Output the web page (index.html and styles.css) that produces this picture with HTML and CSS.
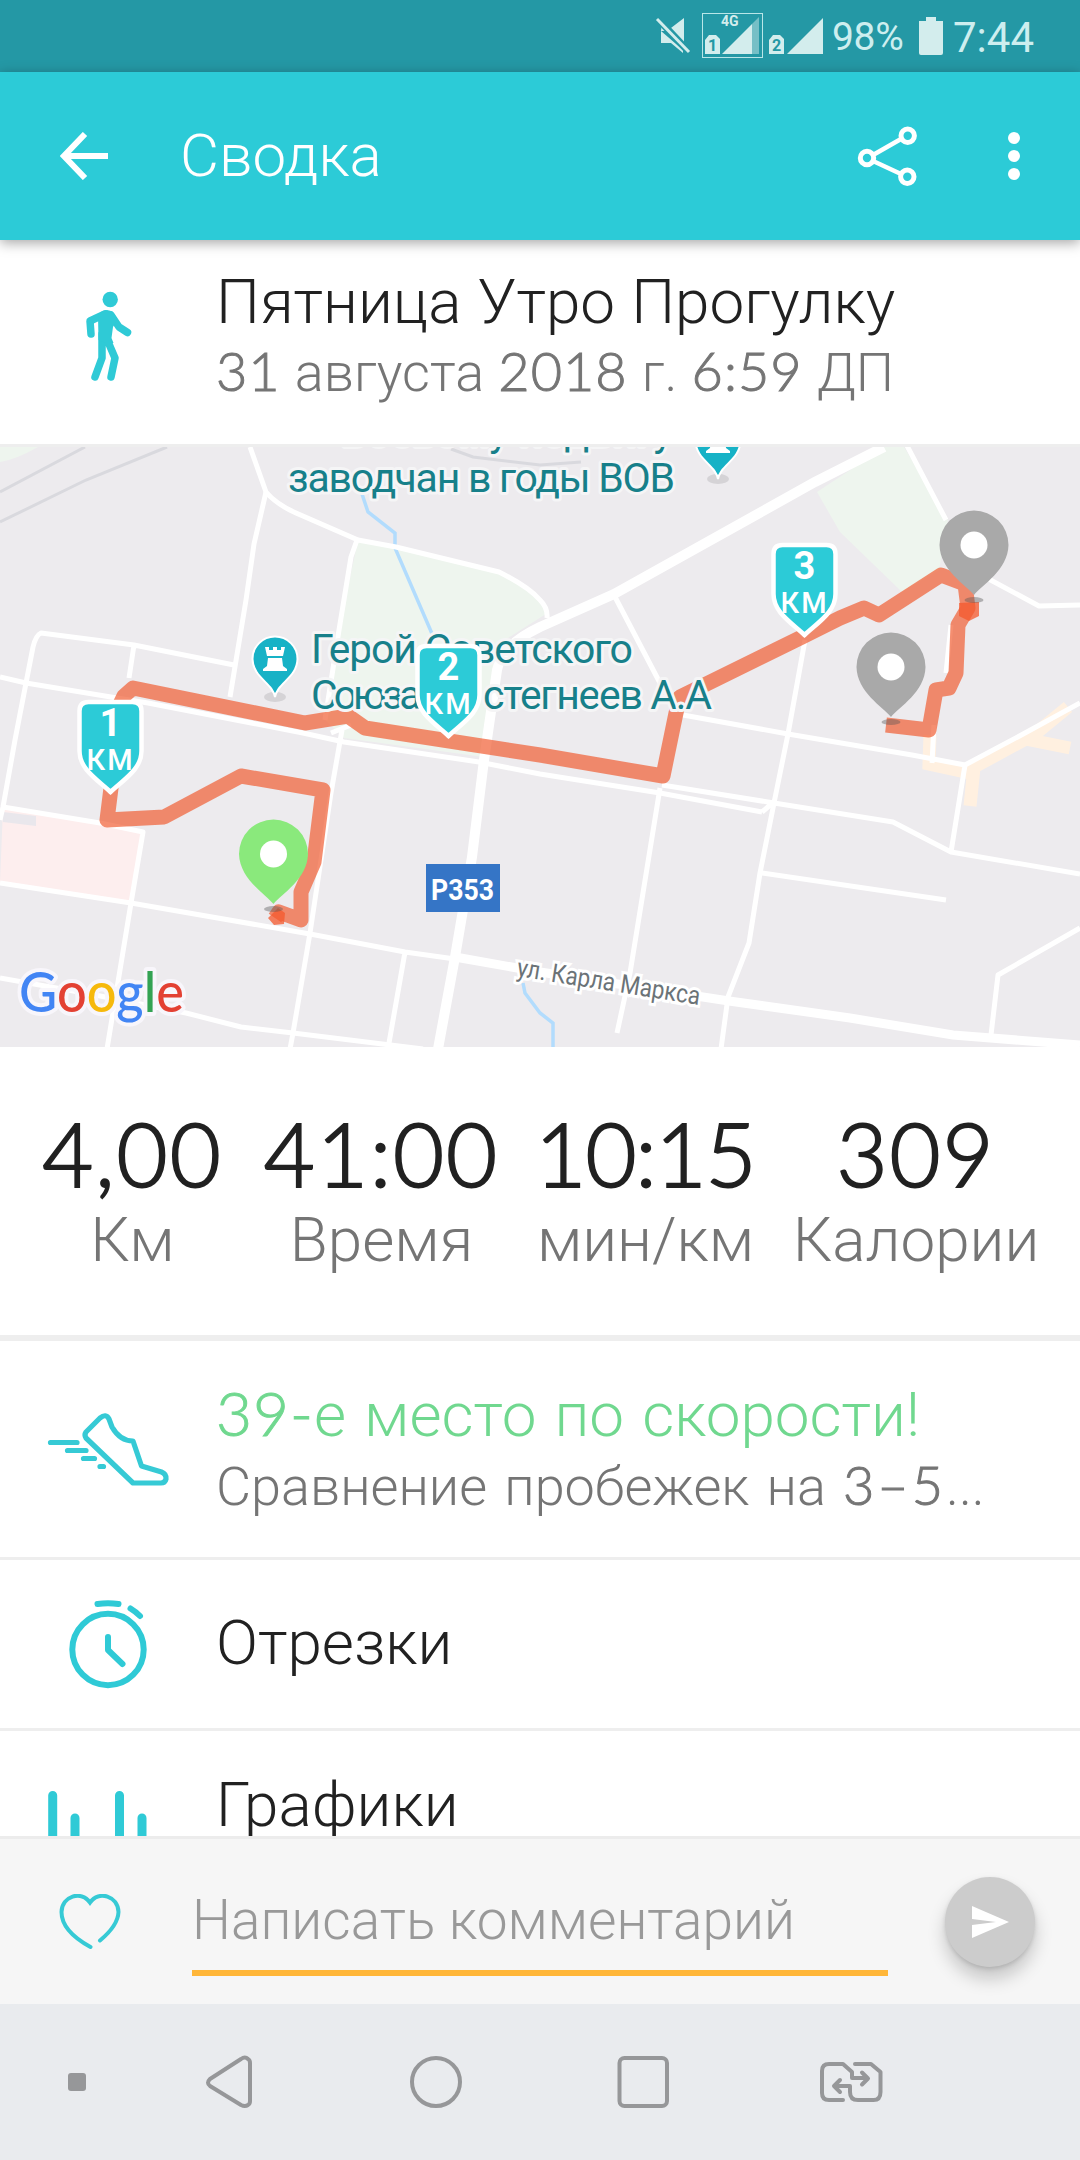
FILE: index.html
```
<!DOCTYPE html>
<html lang="ru">
<head>
    <meta charset="UTF-8">
    <meta name="viewport" content="width=device-width, initial-scale=1.0">
    <title>Сводка</title>
    <link rel="stylesheet" href="styles.css">
</head>
<body>
    <div class="status-bar">
        <svg class="status-icons" width="170" height="72" viewBox="654 0 170 72">
            <path d="M661 31l6 0 17-13v25l-22-22z M661 31v12h10l12 10v-3z" fill="#d3eded"/>
            <path d="M658 19l31 33" stroke="#2498a5" stroke-width="7"/>
            <path d="M657 19l32 33" stroke="#d3eded" stroke-width="3"/>
            <rect x="702.5" y="13.5" width="60" height="44" fill="none" stroke="#b9e6e8"/>
            <path d="M705 54V40l4-5h7l4 4v15z M722 54l30-30v30z M769 54V40l4-5h7l4 4v15z M787 54l36-36v36z" fill="#d3eded"/>
            <path d="M752 24l7-7v37h-7z" fill="#76bfc6"/>
            <text class="status-net" x="721" y="26">4G</text>
            <text class="status-sim" x="712.5" y="51">1</text>
            <text class="status-sim" x="776.5" y="51">2</text>
        </svg>
        <span class="battery-level">98%</span>
        <svg class="battery" width="24" height="38" viewBox="0 0 24 38">
            <path d="M7 0h10v4h7v32q0 2-2 2H2q-2 0-2-2V4h7z" fill="#d3eded"/>
        </svg>
        <span class="clock">7:44</span>
    </div>

    <header class="app-bar">
        <svg class="back" width="50" height="48" viewBox="60 132 50 48">
            <path d="M85 134L64 156l21 22M63 156h45" fill="none" stroke="#fff" stroke-width="6"/>
        </svg>
        <h1>Сводка</h1>
        <svg class="share" width="62" height="62" viewBox="857 125 62 62">
            <g fill="none" stroke="#fff">
                <path d="M873 155l28-16M873 161l28 13" stroke-width="4.5"/>
                <circle cx="867" cy="158" r="6.7" stroke-width="5"/>
                <circle cx="907.7" cy="135.7" r="6.7" stroke-width="5"/>
                <circle cx="907.3" cy="176.7" r="6.7" stroke-width="5"/>
            </g>
        </svg>
        <svg class="more" width="12" height="48" viewBox="0 0 12 48" fill="#fff">
            <circle cx="6" cy="6" r="6"/><circle cx="6" cy="24" r="6"/><circle cx="6" cy="42" r="6"/>
        </svg>
    </header>

    <main class="content">
        <section class="row activity">
            <div class="row-icon">
                <svg width="50" height="94" viewBox="84 290 50 94">
                    <g fill="none" stroke="#2fcad6" stroke-width="7.5" stroke-linecap="round" stroke-linejoin="round">
                        <path d="M106 314l-15 7 1 13M112 315l8 12 8.5 5.5M103 334v24l-7 19M107 337l9 21-4 19"/>
                    </g>
                    <circle cx="111.2" cy="299.5" r="7.7" fill="#2fcad6"/>
                    <path d="M99 316q3-6 9-6 7 0 10 10l-4 7-1.500 11 2 5h-8l-7-3z" fill="#2fcad6"/>
                </svg>
            </div>
            <div class="row-text">
                <div class="row-title">Пятница Утро Прогулку</div>
                <div class="row-sub"><span class="num">31</span> августа <span class="num">2018</span> г. <span class="num">6:59</span> ДП</div>
            </div>
        </section>

        <section class="map">
            <svg width="1080" height="600" viewBox="0 447 1080 600">
                <defs>
                    <g id="place-pin">
                        <ellipse cx="0" cy="55" rx="9.5" ry="3" fill="#555" opacity=".4"/>
                        <path d="M0 50C-8 40-34 25-34.500 0A34.500 34.500 0 0 1 34.500 0C34 25 8 40 0 50z"/>
                        <circle r="13.5" fill="#fff"/>
                    </g>
                    <g id="poi-pin">
                        <ellipse cx="0" cy="38" rx="11" ry="5" fill="#c4c3c6" opacity=".6"/>
                        <path d="M0 38C-2 24-22 19-22.500 0A22.500 22.500 0 0 1 22.500 0C22 19 2 24 0 38z" fill="#17b2c6" stroke="#fff" stroke-width="2"/>
                        <path d="M-10-12h4v3h4v-3h4v3h4v-3h4l-2 9H-8zM-7-1H7l1 8 4 3v2h-24v-2l4-3z" fill="#fff"/>
                    </g>
                    <path id="km-shield" d="M-22-44h44q9 0 9 9V5C31 23 14 33 0 46-14 33-31 23-31 5v-40q0-9 9-9z"/>
                </defs>

                <!-- areas -->
                <path d="M0 447h38Q15 460 0 462zM358 540l38 7 103 25 41 26 6 16-41 26-9 32-12 85-140-19-19-18 14-90zM817 492l68-45h19l44 73-9 50-37 22-62-60z" fill="#eef5ee"/>
                <path d="M3 808l140 24-12 70-131-20z" fill="#fdeeee"/>
                <path d="M3 812l33 4v10l-33-4z" fill="#e9e7ec"/>
                <path d="M930 735l-1 29 36 8 70-38 33-27M1025 739l45 9M974 768l-4 38" fill="none" stroke="#fff0e0" stroke-width="13"/>

                <!-- railway and water -->
                <path d="M0 492l85-45M0 522l86-42 81-33M451 449l22 8 67 8 41-3" fill="none" stroke="#d9d9de" stroke-width="3"/>
                <path d="M360 488l8 24 27 21v15l38 88M523 983l2 10 15 20 13 10v24" fill="none" stroke="#b2dcfd" stroke-width="3.5"/>

                <!-- streets -->
                <g fill="none" stroke="#fff" stroke-width="5" stroke-linejoin="round">
                    <path d="M250 447l16 45q10 12 30 21l62 27 38 7 103 25q30 15 41 28 8 8 7 18"/>
                    <path d="M266 492l-12 52-8 56-16 97M357 540l-6 17-12 73-14 90"/>
                    <path d="M0 677l26 6 91 15 31 5 155 30 41 9 135 20 61 12 120 19 102 19"/>
                    <path d="M0 820l3-13 12-67 11-57 7-36q3-12 8-14l93 12 100 20M134 645l-5 33"/>
                    <path d="M342 730l-11 63-21 140-17 100-3 16M331 733l20-8"/>
                    <path d="M3 807l97 16 43 9-12 71-24 146M0 883l131 20 179 31 95 18 50 7M405 952l-16 91"/>
                    <path d="M0 978l90 16 96 19 55 14 52 6 130 16"/>
                    <path d="M904 440l42 80M985 577l54 29 41-1M614 595l46 88M951 625l-5 48"/>
                    <path d="M683 715l105 19 124 21 53 10 60-32 55-30M934 725l-2 38M965 765l-14 87"/>
                    <path d="M805 640l-17 94-14 69-14 70-11 70-21 54-7 52"/>
                    <path d="M662 785l112 18 119 19 58 30 129 22M660 788l-30 185-13 60M762 873l184 27M1080 928l-82 47-7 60M762 812l14-12"/>
                </g>
                <path d="M884 447l-69 35-201 112-74 33q-38 18-43 43l-13 90-12 97-17 100-17 92" fill="none" stroke="#fff" stroke-width="10"/>
                <path d="M455 957l85 15 189 29 121 17 103 17 127 10" fill="none" stroke="#fff" stroke-width="9"/>

                <!-- recorded track -->
                <path class="track" d="M275 918l4-6 22 8v-28l13-30 9-72-82-14-77 41-57 3 5-40-2-55 14-29 9-8 172 35 43-7 17 12 175 27 123 21 13-63 4-16 122-60 38-19 24-10 15 7 62-40 24 9 3 24-10 17-2 48-7 15-13 2-7 40-43-5"/>
                <path d="M268 918l10-10 7 5-1 11-10 1zM959 603l20-1v14l-10 5-10-5z" fill="#f4582c" opacity=".75"/>

                <!-- labels -->
                <g class="poi-label">
                    <text x="673" y="446" text-anchor="end">Боевому подвигу</text>
                    <text x="288" y="492" textLength="387">заводчан в годы ВОВ</text>
                    <text x="311" y="663" textLength="322">Герой Советского</text>
                    <text x="311" y="709" textLength="158">Союза Ко</text>
                    <text x="483" y="709" textLength="229">стегнеев А.А</text>
                </g>
                <text class="street-label" textLength="185" lengthAdjust="spacingAndGlyphs" transform="translate(516 976) rotate(9)">ул. Карла Маркса</text>
                <rect x="426" y="864" width="74" height="48" fill="#3575c6"/>
                <text class="road-number" x="431" y="900" textLength="63" lengthAdjust="spacingAndGlyphs">Р353</text>

                <!-- pins -->
                <use href="#poi-pin" x="275" y="659"/>
                <use href="#poi-pin" x="718" y="441"/>
                <use href="#place-pin" x="273.5" y="854" fill="#8ae97c"/>
                <use href="#place-pin" x="974" y="545" fill="#a9a9a9"/>
                <use href="#place-pin" x="891" y="667" fill="#a9a9a9"/>
                <g class="km" transform="translate(110.5 746)">
                    <use href="#km-shield"/>
                    <text class="km-value" y="-10">1</text>
                    <text class="km-unit" x="-1" y="24" textLength="46">КМ</text>
                </g>
                <g class="km" transform="translate(448.5 690)">
                    <use href="#km-shield"/>
                    <text class="km-value" y="-10">2</text>
                    <text class="km-unit" x="-1" y="24" textLength="46">КМ</text>
                </g>
                <g class="km" transform="translate(804.5 589)">
                    <use href="#km-shield"/>
                    <text class="km-value" y="-10">3</text>
                    <text class="km-unit" x="-1" y="24" textLength="46">КМ</text>
                </g>
                <text class="google" x="19" y="1012" textLength="165" lengthAdjust="spacingAndGlyphs"><tspan fill="#4285f4">G</tspan><tspan fill="#e34133">o</tspan><tspan fill="#f6b90c">o</tspan><tspan fill="#4285f4">g</tspan><tspan fill="#34a353">l</tspan><tspan fill="#e34133">e</tspan></text>
            </svg>
        </section>

        <section class="stats">
            <div class="stat"><div class="stat-value num">4,00</div><div class="stat-label">Км</div></div>
            <div class="stat"><div class="stat-value num">41:00</div><div class="stat-label">Время</div></div>
            <div class="stat pace"><div class="stat-value num">10:15</div><div class="stat-label">мин/км</div></div>
            <div class="stat"><div class="stat-value num">309</div><div class="stat-label">Калории</div></div>
        </section>

        <section class="row speed">
            <div class="row-icon">
                <svg width="124" height="80" viewBox="46 1410 124 80">
                    <g fill="none" stroke="#36cad5" stroke-width="5.2" stroke-linecap="round" stroke-linejoin="round">
                        <path d="M86 1432l14-14q6-5 9 1l3 8q8 14 21 14l8.500 25 20 6q5 2 4.500 7-1 4-5 4H133L86 1438q-2-3 0-6z"/>
                        <path d="M50.500 1442.500H77M67.500 1450.500H86M83.500 1458.500h11M100 1466.500h3.500"/>
                    </g>
                </svg>
            </div>
            <div class="row-text">
                <div class="row-title good"><span class="num">39-</span>е место по скорости!</div>
                <div class="row-sub">Сравнение пробежек на <span class="num">3–5</span>...</div>
            </div>
        </section>

        <section class="row splits">
            <div class="row-icon">
                <svg width="80" height="94" viewBox="67.5 1597 80 94">
                    <g fill="none" stroke="#2fcad6" stroke-width="6" stroke-linecap="round" stroke-linejoin="round">
                        <circle cx="107.5" cy="1649.5" r="35.7"/>
                        <path d="M107.500 1637v13l14.500 14M97 1604q10.500-1.500 21 0M130 1608.500q5 3 9.500 7.500"/>
                    </g>
                </svg>
            </div>
            <div class="row-text">
                <div class="row-title">Отрезки</div>
            </div>
        </section>

        <section class="row charts">
            <div class="row-icon">
                <svg width="100" height="90" viewBox="47.5 1791 100 90">
                    <path d="M52.200 1795.500V1881M74.500 1818V1881M119 1795.500V1881M141.500 1818V1881M97 1850v31" stroke="#2fcad6" stroke-width="9" stroke-linecap="round"/>
                </svg>
            </div>
            <div class="row-text">
                <div class="row-title">Графики</div>
            </div>
        </section>
    </main>

    <footer class="comment-bar">
        <svg class="heart" width="64" height="56" viewBox="58 1894 64 56">
            <path d="M90.500 1947C74 1938 61.500 1926 61.500 1912 62 1896 81 1890 90 1902.500 99 1890 118 1896 118.500 1912 118 1924 109 1933 100 1940.500" fill="none" stroke="#36cad5" stroke-width="4" stroke-linecap="round"/>
        </svg>
        <div class="comment-input">Написать комментарий</div>
        <div class="send">
            <svg width="37" height="32" viewBox="0 0 37 32">
                <path d="M0 0l37 16L0 32V19l24-3L0 13z" fill="#fff"/>
            </svg>
        </div>
    </footer>

    <nav class="nav-bar">
        <svg width="1080" height="156" viewBox="0 2004 1080 156">
            <rect x="68" y="2073" width="18" height="18" rx="3" fill="#969799"/>
            <g fill="none" stroke="#969799" stroke-width="4" stroke-linecap="round" stroke-linejoin="round">
                <path d="M210 2079l31-20q4-3 7 0 2 1 2 4v38q0 3-2 4-3 2-7 0l-31-19q-4-3 0-7z"/>
                <circle cx="436" cy="2082" r="24"/>
                <rect x="619.5" y="2058" width="47.5" height="48" rx="5"/>
                <path d="M843 2100h-14q-7 0-7-7v-22q0-7 7-7h14l9 8v6h15M862 2072.500l6 6-6 6"/>
                <path d="M855 2064h16l9.500 8v20q0 8-7 8H858q-8 0-8-8v-6h-15M840 2080l-6 6 6 6"/>
            </g>
        </svg>
    </nav>
</body>
</html>
```

FILE: styles.css
```
* {
    box-sizing: border-box;
}

body {
    margin: 0;
    width: 1080px;
    height: 2160px;
    display: flex;
    flex-direction: column;
    overflow: hidden;
    background: #fff;
    font-family: Roboto, "Liberation Sans", sans-serif;
    font-weight: 300;
    color: #212121;
}

svg {
    display: block;
    flex: none;
}

.num {
    font-family: Lato, sans-serif;
    font-weight: 300;
    line-height: 1;
    letter-spacing: 1px;
    -webkit-text-stroke: 1px currentColor;
}

/* status bar */
.status-bar {
    height: 72px;
    flex: none;
    display: flex;
    align-items: center;
    padding-left: 654px;
    background: #2498a5;
    color: #cdeeef;
    font-weight: 400;
    white-space: nowrap;
}

.status-net {
    font-size: 14px;
    font-weight: 700;
    fill: #d3eded;
}

.status-sim {
    font-size: 16px;
    font-weight: 700;
    fill: #2498a5;
    text-anchor: middle;
}

.battery-level {
    width: 87px;
    margin-left: 8px;
    padding-top: 2px;
    font-size: 39px;
    letter-spacing: -0.3px;
}

.clock {
    margin-left: 10px;
    padding-top: 2px;
    font-size: 42px;
}

/* app bar */
.app-bar {
    position: relative;
    z-index: 1;
    height: 168px;
    flex: none;
    display: flex;
    align-items: center;
    padding: 0 60px;
    background: #2ccbd7;
    color: #fff;
    box-shadow: 0 3px 12px rgba(0, 0, 0, 0.35);
}

.app-bar h1 {
    flex: 1;
    margin: 0 0 0 70px;
    font-size: 60px;
    font-weight: 300;
    line-height: 70px;
}

.share {
    margin-right: 89px;
}

/* list rows */
.content {
    flex: 1;
    min-height: 0;
    overflow: hidden;
}

.row {
    display: flex;
    border-bottom: 3px solid #eee;
}

.row-icon {
    width: 216px;
    display: flex;
    align-items: flex-start;
    justify-content: center;
}

.row-text {
    flex: 1;
    white-space: nowrap;
}

.row-title {
    font-size: 62px;
    line-height: 71px;
    word-spacing: 1px;
}

.row-sub {
    font-size: 54px;
    line-height: 71px;
    word-spacing: 1px;
    color: #757575;
}

.good {
    color: #70d88f;
    word-spacing: 3px;
}

.activity {
    height: 207px;
    padding-top: 26px;
}

.activity .row-icon {
    padding-top: 24px;
}

.speed {
    height: 219px;
    padding-top: 38px;
}

.speed .row-icon {
    padding-top: 31px;
}

.speed .row-sub {
    padding-top: 1px;
    word-spacing: 4px;
}

.speed .row-sub .num {
    letter-spacing: 3px;
}

.splits {
    height: 171px;
    align-items: center;
}

.splits .row-text {
    padding-bottom: 4px;
}

.charts {
    height: 171px;
    padding-top: 38px;
}

.charts .row-icon {
    padding: 22px 21px 0 0;
}

/* map */
.map {
    height: 600px;
    overflow: hidden;
    background: #edebee;
}

.track {
    fill: none;
    stroke: #f0582c;
    stroke-width: 15px;
    stroke-linejoin: round;
    opacity: 0.68;
}

.poi-label {
    font-size: 41px;
    font-weight: 400;
    fill: #17808a;
    stroke: #f5f5f6;
    stroke-width: 6px;
    stroke-linejoin: round;
    paint-order: stroke;
}

.street-label {
    font-size: 26px;
    font-weight: 400;
    fill: #6b7377;
    stroke: #fff;
    stroke-width: 6px;
    paint-order: stroke;
}

.road-number {
    font-size: 30px;
    font-weight: 700;
    fill: #fff;
}

.km {
    fill: #2ccbd7;
    stroke: #fff;
    stroke-width: 4.5px;
    text-anchor: middle;
}

.km text {
    fill: #fff;
    stroke: none;
}

.km-value {
    font-size: 38px;
    font-weight: 700;
}

.km-unit {
    font-size: 29px;
    font-weight: 500;
}

.google {
    font-family: Lato, sans-serif;
    font-size: 55px;
    font-weight: 500;
    stroke: #f8f6fb;
    stroke-width: 8px;
    stroke-linejoin: round;
    paint-order: stroke;
}

/* stats */
.stats {
    height: 294px;
    display: grid;
    grid-template-columns: 175px 225px 205px 238px;
    column-gap: 49px;
    padding: 61px 0 0 45px;
    border-bottom: 6px solid #eee;
}

.stat {
    display: flex;
    flex-direction: column;
    align-items: center;
    white-space: nowrap;
}

.stat-value {
    font-size: 88px;
    letter-spacing: 2px;
    line-height: 90px;
    -webkit-text-stroke-width: 2px;
}

.pace .stat-value {
    letter-spacing: -1px;
}

.stat-label {
    font-size: 62px;
    line-height: 84px;
    color: #757575;
}

/* comment bar */
.comment-bar {
    height: 168px;
    flex: none;
    display: flex;
    align-items: center;
    padding: 0 45px 0 58px;
    border-top: 3px solid #ececec;
    background: #f6f6f6;
}

.comment-input {
    width: 696px;
    height: 100px;
    margin: 8px 0 0 70px;
    padding-top: 9px;
    border-bottom: 6px solid #ffb638;
    font-size: 55px;
    line-height: 70px;
    color: #999;
    white-space: nowrap;
}

.send {
    width: 90px;
    height: 90px;
    margin-left: auto;
    display: flex;
    align-items: center;
    justify-content: center;
    border-radius: 50%;
    background: #ccc;
    box-shadow: 0 12px 18px rgba(0, 0, 0, 0.2), 0 2px 4px rgba(0, 0, 0, 0.12);
}

.nav-bar {
    height: 156px;
    flex: none;
    background: #e9ebee;
}
```
